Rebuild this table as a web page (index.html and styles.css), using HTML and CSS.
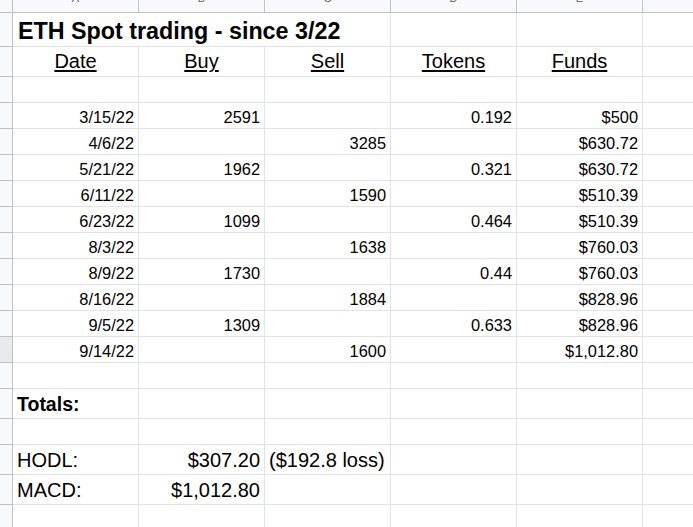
FILE: index.html
```html
<!DOCTYPE html>
<html>
<head>
<meta charset="utf-8">
<link rel="stylesheet" href="styles.css">
</head>
<body>
<div class="sheet">
  <!-- column header row -->
  <div class="corner"></div>
  <div class="ch"><span>A</span></div>
  <div class="ch"><span>B</span></div>
  <div class="ch"><span>C</span></div>
  <div class="ch"><span>D</span></div>
  <div class="ch"><span>E</span></div>
  <div class="ch"><span>F</span></div>

  <!-- row 1: title -->
  <div class="rh"></div>
  <div class="c title span3">ETH Spot trading - since 3/22</div>
  <div class="c"></div><div class="c"></div><div class="c"></div>

  <!-- row 2: headers -->
  <div class="rh"></div>
  <div class="c hd"><u>Date</u></div>
  <div class="c hd"><u>Buy</u></div>
  <div class="c hd"><u>Sell</u></div>
  <div class="c hd"><u>Tokens</u></div>
  <div class="c hd"><u>Funds</u></div>
  <div class="c"></div>

  <!-- row 3: blank -->
  <div class="rh"></div>
  <div class="c"></div><div class="c"></div><div class="c"></div><div class="c"></div><div class="c"></div><div class="c"></div>

  <!-- data rows -->
  <div class="rh"></div>
  <div class="c num">3/15/22</div><div class="c num">2591</div><div class="c num"></div><div class="c num">0.192</div><div class="c num">$500</div><div class="c"></div>

  <div class="rh"></div>
  <div class="c num">4/6/22</div><div class="c num"></div><div class="c num">3285</div><div class="c num"></div><div class="c num">$630.72</div><div class="c"></div>

  <div class="rh"></div>
  <div class="c num">5/21/22</div><div class="c num">1962</div><div class="c num"></div><div class="c num">0.321</div><div class="c num">$630.72</div><div class="c"></div>

  <div class="rh"></div>
  <div class="c num">6/11/22</div><div class="c num"></div><div class="c num">1590</div><div class="c num"></div><div class="c num">$510.39</div><div class="c"></div>

  <div class="rh"></div>
  <div class="c num">6/23/22</div><div class="c num">1099</div><div class="c num"></div><div class="c num">0.464</div><div class="c num">$510.39</div><div class="c"></div>

  <div class="rh"></div>
  <div class="c num">8/3/22</div><div class="c num"></div><div class="c num">1638</div><div class="c num"></div><div class="c num">$760.03</div><div class="c"></div>

  <div class="rh"></div>
  <div class="c num">8/9/22</div><div class="c num">1730</div><div class="c num"></div><div class="c num">0.44</div><div class="c num">$760.03</div><div class="c"></div>

  <div class="rh"></div>
  <div class="c num">8/16/22</div><div class="c num"></div><div class="c num">1884</div><div class="c num"></div><div class="c num">$828.96</div><div class="c"></div>

  <div class="rh"></div>
  <div class="c num">9/5/22</div><div class="c num">1309</div><div class="c num"></div><div class="c num">0.633</div><div class="c num">$828.96</div><div class="c"></div>

  <div class="rh sel"></div>
  <div class="c num">9/14/22</div><div class="c num"></div><div class="c num">1600</div><div class="c num"></div><div class="c num">$1,012.80</div><div class="c"></div>

  <!-- blank -->
  <div class="rh"></div>
  <div class="c"></div><div class="c"></div><div class="c"></div><div class="c"></div><div class="c"></div><div class="c"></div>

  <!-- totals -->
  <div class="rh"></div>
  <div class="c tot bold">Totals:</div><div class="c"></div><div class="c"></div><div class="c"></div><div class="c"></div><div class="c"></div>

  <div class="rh"></div>
  <div class="c"></div><div class="c"></div><div class="c"></div><div class="c"></div><div class="c"></div><div class="c"></div>

  <div class="rh"></div>
  <div class="c tot">HODL:</div><div class="c tot right">$307.20</div><div class="c tot">($192.8 loss)</div><div class="c"></div><div class="c"></div><div class="c"></div>

  <div class="rh"></div>
  <div class="c tot">MACD:</div><div class="c tot right">$1,012.80</div><div class="c"></div><div class="c"></div><div class="c"></div><div class="c"></div>

  <div class="rh"></div>
  <div class="c"></div><div class="c"></div><div class="c"></div><div class="c"></div><div class="c"></div><div class="c"></div>
</div>
</body>
</html>
```

FILE: styles.css
```css
html, body {
  margin: 0;
  padding: 0;
  background: #ffffff;
  overflow: hidden;
}

body {
  width: 693px;
  height: 527px;
}

.sheet {
  display: grid;
  grid-template-columns: 13px repeat(6, 126px);
  grid-template-rows: 13px 34px 30px 26px repeat(10, 26px) 26px 30px 26px 30px 30px 26px;
  width: 769px;
  font-family: "Liberation Sans", Arial, sans-serif;
  color: #000000;
}

.corner {
  background: #f8f9fa;
  border-right: 1px solid #c0c0c0;
  border-bottom: 1px solid #c0c0c0;
}

.ch {
  background: #f8f9fa;
  border-right: 1px solid #c4c4c4;
  border-bottom: 1px solid #c0c0c0;
  display: flex;
  justify-content: center;
  align-items: flex-start;
  overflow: hidden;
  font-size: 11px;
  line-height: 11px;
  color: #5f6368;
}

.ch span {
  margin-top: -7px;
}

.rh {
  background: #f8f9fa;
  border-right: 1px solid #c0c0c0;
  border-bottom: 1px solid #c0c0c0;
}

.rh.sel {
  background: #e8eaed;
}

.c {
  border-right: 1px solid #e2e3e3;
  border-bottom: 1px solid #e2e3e3;
  display: flex;
  align-items: flex-end;
  white-space: nowrap;
  overflow: hidden;
  padding: 0 4px;
}

.span3 {
  grid-column: span 3;
}

.title {
  font-size: 23.3px;
  line-height: 1;
  font-weight: bold;
  padding-left: 5px;
  padding-bottom: 3px;
}

.hd {
  font-size: 20px;
  line-height: 1;
  justify-content: center;
  padding-bottom: 5px;
}

.hd u {
  text-decoration-thickness: 1.5px;
  text-underline-offset: 2px;
}

.num {
  font-size: 16.4px;
  line-height: 1;
  justify-content: flex-end;
  padding-bottom: 3px;
}

.tot {
  font-size: 20px;
  line-height: 1;
  padding-bottom: 4px;
}

.tot.right {
  justify-content: flex-end;
}

.bold {
  font-weight: bold;
  font-size: 19.5px;
}
```
